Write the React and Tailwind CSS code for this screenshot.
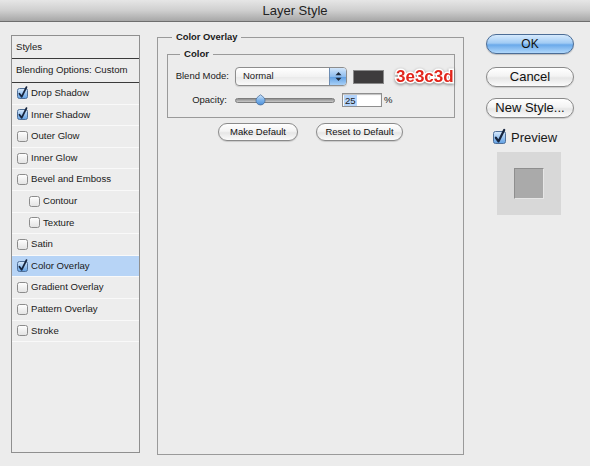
import React from "react";

function Box({ checked, size = 11 }) {
  const s = size;
  return (
    <svg width={s} height={s} viewBox={`0 0 ${s} ${s}`} overflow="visible" className="shrink-0 block">
      <defs>
        <linearGradient id="cbOn" x1="0" y1="0" x2="0" y2="1">
          <stop offset="0" stopColor="#d9eafc" />
          <stop offset="0.5" stopColor="#9cc5f0" />
          <stop offset="1" stopColor="#5f9fe3" />
        </linearGradient>
        <linearGradient id="cbOff" x1="0" y1="0" x2="0" y2="1">
          <stop offset="0" stopColor="#ffffff" />
          <stop offset="1" stopColor="#e2e2e2" />
        </linearGradient>
      </defs>
      <rect
        x="0.5"
        y="0.5"
        width={s - 1}
        height={s - 1}
        rx="2"
        fill={checked ? "url(#cbOn)" : "url(#cbOff)"}
        stroke={checked ? "#4f6f98" : "#8c8c8c"}
      />
      {checked && (
        <path
          d={`M${s * 0.22} ${s * 0.52} L${s * 0.42} ${s * 0.8} L${s * 0.86} ${-s * 0.08}`}
          stroke="#16243d"
          strokeWidth={s > 11 ? 2.2 : 1.8}
          fill="none"
          strokeLinecap="round"
          strokeLinejoin="round"
        />
      )}
    </svg>
  );
}

const items = [
  { t: "Drop Shadow", c: true },
  { t: "Inner Shadow", c: true },
  { t: "Outer Glow" },
  { t: "Inner Glow" },
  { t: "Bevel and Emboss" },
  { t: "Contour", i: true },
  { t: "Texture", i: true },
  { t: "Satin" },
  { t: "Color Overlay", c: true, s: true },
  { t: "Gradient Overlay" },
  { t: "Pattern Overlay" },
  { t: "Stroke" },
];

function AquaButton({ children, className }) {
  return (
    <div
      className={
        "flex items-center justify-center rounded-full border border-[#8a8a8a] bg-[linear-gradient(#ffffff,#f3f3f3_45%,#e6e6e6_55%,#fbfbfb)] shadow-[0_1px_1px_rgba(0,0,0,0.15)] text-[#111] " +
        className
      }
    >
      {children}
    </div>
  );
}

export default function App() {
  return (
    <div className="w-[590px] h-[466px] overflow-hidden bg-[#ececec] font-['Liberation_Sans',Arial,sans-serif] text-[#1a1a1a]">
      {/* Title bar */}
      <div className="h-[22px] flex items-center justify-center border-b border-[#6e6e6e] bg-[linear-gradient(#e6e6e6,#cfcfcf_50%,#a7a7a7)] text-[13px] text-[#222] leading-none">
        Layer Style
      </div>

      <div className="flex items-start pl-[11px]">
        {/* Left list panel */}
        <div className="mt-[13px] w-[129px] h-[418px] border border-[#8f8f8f] bg-[#ededed] text-[9.6px]">
          <div className="h-[23px] flex items-center pl-[4px] border-b border-[#3a3a3a]">Styles</div>
          <div className="h-[24px] flex items-center pl-[4px] border-b border-[#3a3a3a]">
            Blending Options: Custom
          </div>
          {items.map((it) => (
            <div
              key={it.t}
              className={
                "h-[21.6px] flex items-center gap-[3px] border-b border-[#f9f9f9] " +
                (it.i ? "pl-[17px] " : "pl-[5px] ") +
                (it.s ? "bg-[#b7d4f6]" : "")
              }
            >
              <Box checked={!!it.c} />
              <span>{it.t}</span>
            </div>
          ))}
        </div>

        {/* Center fieldset */}
        <fieldset className="ml-[17px] mt-[8px] w-[307px] h-[425px] border border-[#9a9a9a]">
          <legend className="ml-[14px] px-[4px] text-[9.4px] font-bold leading-[14px]">Color Overlay</legend>

          <fieldset className="ml-[9px] mt-[3px] w-[288px] border border-[#9a9a9a] pb-[10px]">
            <legend className="ml-[12px] px-[4px] text-[9.6px] font-bold leading-[14px]">Color</legend>

            <div className="mt-[6px] flex items-center text-[9.5px]">
              <div className="w-[61px] text-right">Blend Mode:</div>
              <div className="ml-[6px] w-[112px] h-[19px] shrink-0 flex rounded-[4px] border border-[#8d8d8d] bg-[linear-gradient(#ffffff,#f2f2f2_50%,#e8e8e8_51%,#fafafa)] overflow-hidden shadow-[0_1px_1px_rgba(0,0,0,0.12)]">
                <div className="flex-1 flex items-center pl-[7px]">Normal</div>
                <div className="w-[17px] border-l border-[#6d8db3] bg-[linear-gradient(#d2e6fb,#8fbdee_50%,#5d9de2_51%,#a8d0f7)] flex items-center justify-center">
                  <svg width="7" height="11" viewBox="0 0 7 11">
                    <path d="M3.5 1 L6.5 4.3 L0.5 4.3 Z" fill="#1e2a3c" />
                    <path d="M3.5 10 L6.5 6.7 L0.5 6.7 Z" fill="#1e2a3c" />
                  </svg>
                </div>
              </div>
              <div className="ml-[6px] w-[31px] h-[14px] shrink-0 bg-[#3e3c3d] border border-[#8a8a8a]" />
              <div className="ml-[12px] shrink-0 whitespace-nowrap text-[17px] font-bold text-[#e2261c] leading-none [-webkit-text-stroke:3px_#ffffff] [paint-order:stroke_fill] [filter:drop-shadow(0_1px_1.5px_rgba(0,0,0,0.45))]">
                3e3c3d
              </div>
            </div>

            <div className="mt-[7px] flex items-center text-[9.5px] h-[14px]">
              <div className="w-[59px] text-right">Opacity:</div>
              <div className="ml-[8px] relative w-[100px] h-[14px] shrink-0 flex items-center">
                <div className="w-full h-[5px] rounded-full border border-[#7d7d7d] bg-[linear-gradient(#8f8f8f,#c9c9c9)]" />
                <svg className="absolute left-[20px] top-[1px]" width="11" height="12" viewBox="0 0 11 12">
                  <defs>
                    <linearGradient id="kn" x1="0" y1="0" x2="0" y2="1">
                      <stop offset="0" stopColor="#d4e8fc" />
                      <stop offset="0.5" stopColor="#7fb5ec" />
                      <stop offset="1" stopColor="#4d8fd8" />
                    </linearGradient>
                  </defs>
                  <path
                    d="M5.5 0.8 L7.8 2.6 A4.5 4.5 0 1 1 3.2 2.6 Z"
                    fill="url(#kn)"
                    stroke="#4a6e9a"
                    strokeWidth="0.8"
                  />
                </svg>
              </div>
              <div className="ml-[7px] w-[40px] h-[14px] shrink-0 bg-white border border-[#8e8e8e] shadow-[inset_0_1px_1px_rgba(0,0,0,0.25)] flex items-center pl-[1px]">
                <span className="bg-[#b4d4fb] px-[1px] leading-[11px]">25</span>
              </div>
              <div className="ml-[2px]">%</div>
            </div>
          </fieldset>

          <div className="mt-[5px] flex justify-center gap-[18px] text-[9.5px]">
            <AquaButton className="w-[80px] h-[18px]">Make Default</AquaButton>
            <AquaButton className="w-[87px] h-[18px]">Reset to Default</AquaButton>
          </div>
        </fieldset>

        {/* Right column */}
        <div className="ml-[22px] mt-[12px] w-[88px] flex flex-col text-[13px]">
          <div className="h-[20px] flex items-center justify-center rounded-full border border-[#4c6d96] bg-[linear-gradient(#d6eafd,#a1cbf4_45%,#6aa9ea_55%,#b1d8fb)] shadow-[0_1px_1px_rgba(0,0,0,0.2)] text-[12px] text-[#111]">
            OK
          </div>
          <AquaButton className="mt-[13px] h-[20px]">Cancel</AquaButton>
          <AquaButton className="mt-[11px] h-[20px]">New Style...</AquaButton>
          <div className="mt-[13px] h-[13px] flex items-center gap-[5px] pl-[7px]">
            <Box checked size={13} />
            <span className="leading-none">Preview</span>
          </div>
          <div className="mt-[8px] ml-[11px] w-[64px] h-[63px] bg-[#d8d8d8] flex items-center justify-center">
            <div className="w-[30px] h-[31px] bg-[#aaaaaa] border border-t-[#8e8e8e] border-l-[#8e8e8e] border-r-[#e6e6e6] border-b-[#e6e6e6]" />
          </div>
        </div>
      </div>
    </div>
  );
}
